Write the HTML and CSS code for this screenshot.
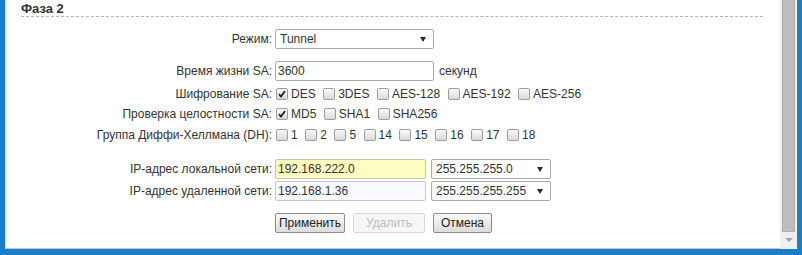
FILE: index.html
```html
<!DOCTYPE html>
<html lang="ru">
<head>
	<meta charset="UTF-8">
	<title>Фаза 2</title>
	<link rel="stylesheet" href="styles.css">
</head>
<body>
	<div class="window">
		<div class="content">
			<h3 class="section-title">Фаза 2</h3>
			<form class="phase-form" name="phase2">
				<div class="row row-mode">
					<span class="row-label">Режим:</span>
					<select class="field select-wide" name="mode"><option>Tunnel</option></select>
				</div>
				<div class="row row-life">
					<span class="row-label">Время жизни SA:</span>
					<input type="text" class="field input-wide" name="lifetime" value="3600">
					<span class="unit">секунд</span>
				</div>
				<div class="row row-enc">
					<span class="row-label">Шифрование SA:</span>
					<div class="checks">
						<label class="check"><input type="checkbox" checked>DES</label>
						<label class="check"><input type="checkbox">3DES</label>
						<label class="check"><input type="checkbox">AES-128</label>
						<label class="check"><input type="checkbox">AES-192</label>
						<label class="check"><input type="checkbox">AES-256</label>
					</div>
				</div>
				<div class="row">
					<span class="row-label">Проверка целостности SA:</span>
					<div class="checks">
						<label class="check"><input type="checkbox" checked>MD5</label>
						<label class="check"><input type="checkbox">SHA1</label>
						<label class="check"><input type="checkbox">SHA256</label>
					</div>
				</div>
				<div class="row row-dh">
					<span class="row-label">Группа Диффи-Хеллмана (DH):</span>
					<div class="checks">
						<label class="check"><input type="checkbox">1</label>
						<label class="check"><input type="checkbox">2</label>
						<label class="check"><input type="checkbox">5</label>
						<label class="check"><input type="checkbox">14</label>
						<label class="check"><input type="checkbox">15</label>
						<label class="check"><input type="checkbox">16</label>
						<label class="check"><input type="checkbox">17</label>
						<label class="check"><input type="checkbox">18</label>
					</div>
				</div>
				<div class="row row-local">
					<span class="row-label">IP-адрес локальной сети:</span>
					<input type="text" class="field input-ip focused" name="local_ip" value="192.168.222.0">
					<select class="field select-mask" name="local_mask"><option>255.255.255.0</option></select>
				</div>
				<div class="row row-remote">
					<span class="row-label">IP-адрес удаленной сети:</span>
					<input type="text" class="field input-ip filled" name="remote_ip" value="192.168.1.36">
					<select class="field select-mask" name="remote_mask"><option>255.255.255.255</option></select>
				</div>
				<div class="row row-buttons">
					<span class="row-label"></span>
					<div class="buttons">
						<input type="button" class="btn btn-apply" value="Применить">
						<input type="button" class="btn btn-delete" value="Удалить" disabled>
						<input type="button" class="btn btn-cancel" value="Отмена">
					</div>
				</div>
			</form>
		</div>
		<div class="scrollbar">
			<div class="thumb"></div>
			<div class="arrow-down"></div>
		</div>
	</div>
</body>
</html>
```

FILE: styles.css
```css
body{
	margin: 0;
	overflow: hidden;
	font-family: "Liberation Sans", Arial, sans-serif;
	font-size: 12px;
	color: #333;
}
.window{
	display: flex;
	width: 802px;
	height: 255px;
	box-sizing: border-box;
	padding: 0 5px 6px 5px;
	background-color: #1a7fc5;
}
.content{
	flex: 1;
	background-color: #fff;
	border-left: 1px solid #d2d2d2;
	border-bottom: 1px solid #c8c8c8;
	padding: 0 17px 0 15px;
}
.section-title{
	margin: 0;
	padding-top: 2px;
	height: 14px;
	line-height: 14px;
	font-size: 13px;
	font-weight: bold;
	color: #333;
	border-bottom: 1px dashed #b4b4b4;
}
.row{
	display: flex;
	align-items: center;
	height: 20px;
}
.row-mode, .row-life, .row-buttons{
	margin-top: 12px;
}
.row-enc{
	margin-top: 3px;
}
.row-dh{
	margin-top: 1px;
}
.row-local{
	margin-top: 14px;
}
.row-remote{
	margin-top: 2px;
}
.row-label{
	width: 251px;
	margin-right: 3px;
	text-align: right;
	white-space: nowrap;
}
.field{
	box-sizing: border-box;
	height: 20px;
	margin: 0;
	border: 1px solid #ababab;
	border-radius: 2px;
	background-color: #fff;
	font-family: "Liberation Sans", Arial, sans-serif;
	font-size: 12px;
	color: #333;
	outline: none;
}
input.field{
	padding: 0 2px;
}
select.field{
	appearance: none;
	-webkit-appearance: none;
	padding: 0 0 0 4px;
	background-image: url("data:image/svg+xml;utf8,<svg xmlns='http://www.w3.org/2000/svg' width='6' height='5'><path d='M0 0h6L3 5z' fill='%23222c36'/></svg>");
	background-repeat: no-repeat;
	background-position: right 7px center;
}
.select-wide, .input-wide{
	width: 159px;
}
.unit{
	margin-left: 5px;
}
.input-ip{
	width: 151px;
	padding-left: 3px;
}
.focused{
	background-color: #fdfdc2;
	border-color: #c4c4b0;
}
.filled{
	background-color: #f8fbff;
	border-color: #c6c6c6;
}
.select-mask{
	width: 120px;
	margin-left: 5px;
	padding-left: 5px;
	background-position: right 6px center;
}
.checks{
	display: flex;
	align-items: center;
	gap: 7.5px;
	padding-left: 1px;
}
.check{
	display: flex;
	align-items: center;
	white-space: nowrap;
}
.check input{
	appearance: none;
	-webkit-appearance: none;
	box-sizing: border-box;
	width: 12px;
	height: 12px;
	margin: 0 3px 0 0;
	border: 1px solid #9c9c9c;
	border-radius: 2px;
	background: linear-gradient(#fafafa, #dadada);
}
.check input:checked{
	background: url("data:image/svg+xml;utf8,<svg xmlns='http://www.w3.org/2000/svg' width='10' height='10'><path d='M2 5.2l2 2.3L8 2' stroke='%23222' stroke-width='1.8' fill='none'/></svg>") center no-repeat, linear-gradient(#fafafa, #dadada);
}
.buttons{
	display: flex;
	gap: 8px;
}
.btn{
	box-sizing: border-box;
	height: 20px;
	margin: 0;
	padding: 0;
	border: 1px solid #8c8c8c;
	border-radius: 2px;
	background: linear-gradient(#fbfbfb, #dcdcdc);
	font-family: "Liberation Sans", Arial, sans-serif;
	font-size: 12px;
	color: #222;
}
.btn-apply{
	width: 70px;
}
.btn-delete{
	width: 72px;
	color: #bdbdbd;
	border-color: #d6d6d6;
	background: #f6f6f6;
}
.btn-cancel{
	width: 59px;
}
.scrollbar{
	width: 17px;
	background-color: #f0f0f0;
	display: flex;
	flex-direction: column;
	align-items: center;
}
.thumb{
	box-sizing: border-box;
	width: 13px;
	height: 232px;
	background-color: #bdbdbd;
	border: 1px solid #adadad;
	border-top: none;
}
.arrow-down{
	margin-top: 6px;
	width: 0;
	height: 0;
	border-left: 4px solid transparent;
	border-right: 4px solid transparent;
	border-top: 4px solid #a3a3a3;
}
```
